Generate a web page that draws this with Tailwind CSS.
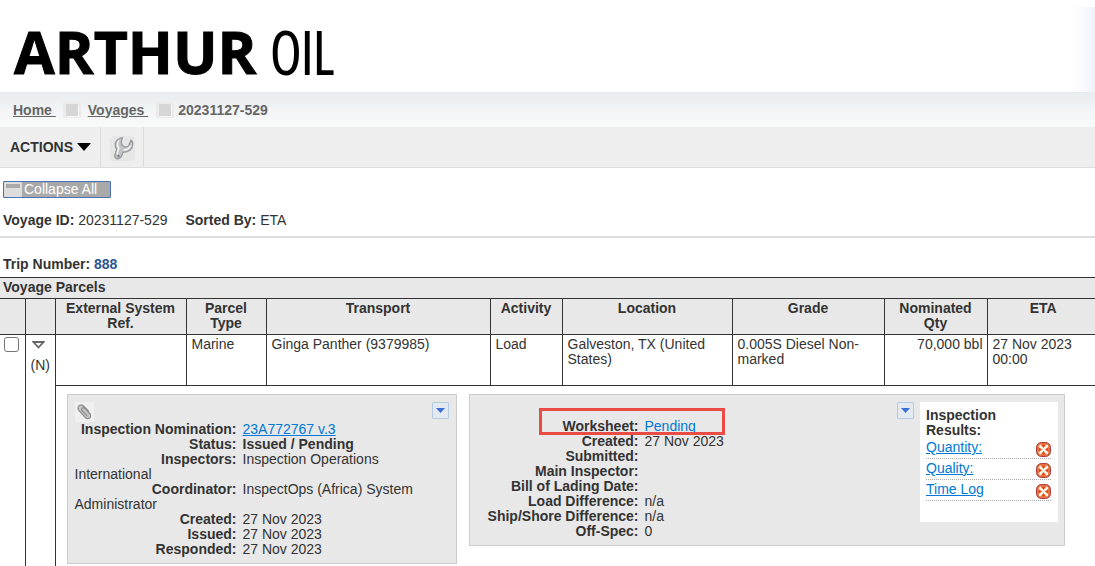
<!DOCTYPE html>
<html lang="en">
<head>
  <meta charset="UTF-8" />
  <meta name="viewport" content="width=device-width, initial-scale=1.0"/>
  <title>Voyage 20231127-529 - Arthur Oil</title>
  <script src="https://cdn.jsdelivr.net/npm/@tailwindcss/browser@4"></script>
</head>
<body class="bg-white text-[#333] font-['Liberation_Sans',Arial,sans-serif] text-[14px] leading-[15px] overflow-x-hidden">

  <header class="pt-[7px]">
    <div class="h-[85px] flex justify-between">
      <h1 class="pt-[3px] pl-[14px] flex items-center gap-[14px] text-black text-[59px] leading-[82px] whitespace-nowrap">
        <span class="font-bold font-['Open_Sans','Noto_Sans',sans-serif] [-webkit-text-stroke:1px_black]">ARTHUR</span>
        <span class="font-light font-['Open_Sans_Condensed_Light','Noto_Sans_ExtraCondensed_Light','Noto_Sans_ExtraCondensed','Roboto_Condensed_Light','Roboto_Condensed','Liberation_Sans_Narrow',sans-serif] [-webkit-text-stroke:2px_black]">OIL</span>
      </h1>
      <div class="w-[22px] bg-linear-to-r from-white to-[#eef3f9]"></div>
    </div>
  </header>

  <nav aria-label="Breadcrumb" class="h-[35px] flex items-center pl-[13px] border-t border-[#e8e9eb] bg-linear-to-b from-[#e9edf0] to-[#fafafa] font-bold text-[#666]">
    <a href="#" class="underline whitespace-pre">Home </a>
    <svg class="mx-[7px]" width="18" height="16" viewBox="0 0 18 16"><rect width="18" height="16" rx="1" fill="#ebebeb"/><rect x="3" y="2" width="12" height="12" fill="#d6d6d6"/><path d="M4 14.500h11.500V3" fill="none" stroke="#f8f8f8"/></svg>
    <a href="#" class="underline whitespace-pre">Voyages </a>
    <svg class="ml-[8px] mr-[4px]" width="18" height="16" viewBox="0 0 18 16"><rect width="18" height="16" rx="1" fill="#ebebeb"/><rect x="3" y="2" width="12" height="12" fill="#d6d6d6"/><path d="M4 14.500h11.500V3" fill="none" stroke="#f8f8f8"/></svg>
    <span>20231127-529</span>
  </nav>

  <div class="h-[41px] flex bg-[#eee] border-b border-[#ddd]">
    <button class="w-[101px] pl-[10px] flex items-center gap-[4px] font-bold border-r border-[#ddd]">
      ACTIONS
      <svg width="14" height="8" viewBox="0 0 14 8"><path d="M0 0h14L7 8z" fill="#000"/></svg>
    </button>
    <button aria-label="Settings" class="w-[43px] flex items-center justify-center pt-[3px] border-r border-[#ddd]">
      <svg width="25" height="25" viewBox="0 0 25 25"><rect width="25" height="25" rx="4" fill="#e6e6e6"/><path d="M12.500 1.500C8 2 4.800 5.500 5.200 10c.2 1.500.8 2.500 1.500 3.200L4.800 19c-.5 2.500 1.400 4.200 3.700 3.700 1.900-.4 2.800-1.600 3.300-3.200l1.400-3.300c5.200.3 9.300-3 9.600-7.700 0-2-.6-3.500-1.800-4.500l-2.500 6-3.500 1.200-3.500-2.700 0-4z" fill="#c3c4c7" stroke="#96979a" stroke-width="1.200" stroke-linejoin="round"/><path d="M9 4.500C7.200 6.500 7 9.500 8.700 12L7 18.500M13.500 14c3.500 0 5.800-1.500 7.300-4.500" fill="none" stroke="#f4f4f4" stroke-width="1.600"/><circle cx="8.500" cy="20" r="1.200" fill="#7c7d80"/></svg>
    </button>
  </div>

  <main>
    <div class="pt-[13px] pl-[3px]">
      <button class="w-[108px] h-[17px] flex items-center gap-[2px] bg-[#a9a9a9] border border-[#4a72b8] rounded-[1px] text-white">
        <svg width="18" height="15" viewBox="0 0 18 15"><rect width="18" height="15" rx="1" fill="#ddd"/><rect x="2" y="2" width="14" height="4" fill="#a9a9a9"/></svg>
        Collapse All
      </button>
    </div>

    <div class="mt-[15px] pb-[8px] pl-[3px] flex gap-[18px] border-b-2 border-[#ddd]">
      <p><b>Voyage ID:</b> 20231127-529</p>
      <p><b>Sorted By:</b> ETA</p>
    </div>

    <h2 class="mt-[19px] mb-[5px] pl-[3px] font-bold">Trip Number: <span class="text-[#2a5690]">888</span></h2>

    <table class="w-full table-fixed border-collapse">
      <colgroup>
        <col class="w-[25px]"><col class="w-[30px]"><col class="w-[131px]"><col class="w-[80px]"><col class="w-[224px]"><col class="w-[72px]"><col class="w-[170px]"><col class="w-[152px]"><col class="w-[103px]"><col>
      </colgroup>
      <thead class="bg-[#e8e8e8]">
        <tr class="h-[21px] border-y border-[#333]">
          <th colspan="10" class="pl-[3px] pb-[2px] text-left">Voyage Parcels</th>
        </tr>
        <tr class="h-[36px] align-top border-b border-[#333]">
          <th class="border-r border-[#333]"></th>
          <th class="border-r border-[#333]"></th>
          <th class="pt-[2px] px-[4px] border-r border-[#333]">External System Ref.</th>
          <th class="pt-[2px] px-[4px] border-r border-[#333]">Parcel Type</th>
          <th class="pt-[2px] px-[4px] border-r border-[#333]">Transport</th>
          <th class="pt-[2px] px-[4px] border-r border-[#333]">Activity</th>
          <th class="pt-[2px] px-[4px] border-r border-[#333]">Location</th>
          <th class="pt-[2px] px-[4px] border-r border-[#333]">Grade</th>
          <th class="pt-[2px] px-[4px] border-r border-[#333]">Nominated Qty</th>
          <th class="pt-[2px] pl-[4px]">ETA</th>
        </tr>
      </thead>
      <tbody>
        <tr class="h-[51px] align-top">
          <td rowspan="2" class="pt-[2px] pl-[4px] border-r border-[#333]">
            <input type="checkbox" aria-label="Select parcel" class="block size-[15px] appearance-none bg-white border border-[#767676] rounded-[3px]" />
          </td>
          <td rowspan="2" class="pt-[6px] pl-[5px] border-r border-[#333]">
            <button aria-label="Toggle parcel details" class="block pl-[1px]">
              <svg width="13" height="8" viewBox="0 0 13 8"><path d="M1.500 1h10L6.500 6.500z" fill="#fff" stroke="#666" stroke-width="1.800"/></svg>
            </button>
            <p class="mt-[9px]">(N)</p>
          </td>
          <td class="border-r border-b border-[#333]"></td>
          <td class="pt-[2px] pl-[5px] border-r border-b border-[#333]">Marine</td>
          <td class="pt-[2px] pl-[5px] border-r border-b border-[#333]">Ginga Panther (9379985)</td>
          <td class="pt-[2px] pl-[5px] border-r border-b border-[#333]">Load</td>
          <td class="pt-[2px] pl-[5px] border-r border-b border-[#333]">Galveston, TX (United States)</td>
          <td class="pt-[2px] pl-[5px] border-r border-b border-[#333]">0.005S Diesel Non-marked</td>
          <td class="pt-[2px] pr-[4px] text-right border-r border-b border-[#333]">70,000 bbl</td>
          <td class="pt-[2px] pl-[5px] border-b border-[#333]">27 Nov 2023 00:00</td>
        </tr>
        <tr>
          <td colspan="8" class="pt-[8px] pl-[11px] pr-[30px] pb-[8px]">
            <div class="flex items-start gap-[12px]">

              <!-- nomination -->
              <section class="w-[390px] shrink-0 p-[7px] pb-[6px] bg-[#e8e8e8] border border-[#ccc]">
                <div class="h-[20px] flex justify-between items-start">
                  <svg width="19" height="20" viewBox="0 0 19 20"><rect width="19" height="20" fill="#f0f0f0"/><path d="M3 7c-.5-3 2.500-5 5-3.500l7 7c2 2.500 1.500 5.500-.8 6.200-1.700.5-3-.2-4.200-1.700z" fill="#c4c4c4"/><g fill="none" stroke="#8e8e8e" stroke-width="1.200" stroke-linecap="round"><path d="M13.500 9L8 3.500C6 2 2.500 3.500 3 6.500c.1.800.4 1.300 1 2l6.500 7.300c1.800 1.700 5 .7 5.200-1.800 0-1.200-.4-2-1.200-2.700L9.500 6.200C7.800 5 6 6.500 6.800 8.200l5 5.500"/></g></svg>
                  <button aria-label="Nomination menu" class="size-[17px] flex items-center justify-center bg-[#e3e9f1] border border-[#b5cbe0] rounded-[1px]">
                    <svg width="9" height="5" viewBox="0 0 9 5"><path d="M0 0h9L4.500 5z" fill="#3a6fd8"/></svg>
                  </button>
                </div>
                <div><b class="float-left w-[162px] mr-[6px] text-right">Inspection Nomination:</b><a href="#" class="text-[#0078d7] underline">23A772767 v.3</a></div>
                <div><b class="float-left w-[162px] mr-[6px] text-right">Status:</b><b>Issued / Pending</b></div>
                <div><b class="float-left w-[162px] mr-[6px] text-right">Inspectors:</b>Inspection Operations International</div>
                <div><b class="float-left w-[162px] mr-[6px] text-right">Coordinator:</b>InspectOps (Africa) System Administrator</div>
                <div><b class="float-left w-[162px] mr-[6px] text-right">Created:</b>27 Nov 2023</div>
                <div><b class="float-left w-[162px] mr-[6px] text-right">Issued:</b>27 Nov 2023</div>
                <div><b class="float-left w-[162px] mr-[6px] text-right">Responded:</b>27 Nov 2023</div>
              </section>

              <!-- worksheet -->
              <section class="relative grow flex items-start p-[7px] pr-[6px] pb-[6px] bg-[#e8e8e8] border border-[#ccc]">
                <dl class="grow pt-[17px] grid grid-cols-[162px_1fr] auto-rows-[15px] gap-x-[6px]">
                  <dt class="font-bold text-right">Worksheet:</dt><dd><a href="#" class="text-[#0078d7]">Pending</a></dd>
                  <dt class="font-bold text-right">Created:</dt><dd>27 Nov 2023</dd>
                  <dt class="font-bold text-right">Submitted:</dt><dd></dd>
                  <dt class="font-bold text-right">Main Inspector:</dt><dd></dd>
                  <dt class="font-bold text-right">Bill of Lading Date:</dt><dd></dd>
                  <dt class="font-bold text-right">Load Difference:</dt><dd>n/a</dd>
                  <dt class="font-bold text-right">Ship/Shore Difference:</dt><dd>n/a</dd>
                  <dt class="font-bold text-right">Off-Spec:</dt><dd>0</dd>
                </dl>
                <button aria-label="Worksheet menu" class="size-[17px] mr-[6px] flex items-center justify-center bg-[#e3e9f1] border border-[#b5cbe0] rounded-[1px]">
                  <svg width="9" height="5" viewBox="0 0 9 5"><path d="M0 0h9L4.500 5z" fill="#3a6fd8"/></svg>
                </button>
                <div class="w-[138px] h-[120px] py-[6px] pl-[6px] pr-[7px] bg-white">
                  <h3 class="w-[80px] font-bold">Inspection Results:</h3>
                  <ul>
                    <li class="h-[21px] flex justify-between border-b border-dotted border-[#aaa]">
                      <a href="#" class="pt-[2px] text-[#0078d7] underline">Quantity:</a>
                      <svg class="mt-[4px]" width="15" height="15" viewBox="0 0 15 15"><rect x=".5" y=".5" width="14" height="14" rx="5" fill="#e8703f" stroke="#a83a3a"/><path d="M4.300 4.300l6.400 6.400M10.700 4.300l-6.400 6.400" stroke="#fff3e6" stroke-width="3.200" stroke-linecap="round"/><path d="M7.500 6l-2-3h4zM7.500 9l-2 3h4zM6 7.500l-3-2v4zM9 7.500l3-2v4z" fill="#e0480f"/></svg>
                    </li>
                    <li class="h-[21px] flex justify-between border-b border-dotted border-[#aaa]">
                      <a href="#" class="pt-[2px] text-[#0078d7] underline">Quality:</a>
                      <svg class="mt-[4px]" width="15" height="15" viewBox="0 0 15 15"><rect x=".5" y=".5" width="14" height="14" rx="5" fill="#e8703f" stroke="#a83a3a"/><path d="M4.300 4.300l6.400 6.400M10.700 4.300l-6.400 6.400" stroke="#fff3e6" stroke-width="3.200" stroke-linecap="round"/><path d="M7.500 6l-2-3h4zM7.500 9l-2 3h4zM6 7.500l-3-2v4zM9 7.500l3-2v4z" fill="#e0480f"/></svg>
                    </li>
                    <li class="h-[21px] flex justify-between border-b border-dotted border-[#aaa]">
                      <a href="#" class="pt-[2px] text-[#0078d7] underline">Time Log</a>
                      <svg class="mt-[4px]" width="15" height="15" viewBox="0 0 15 15"><rect x=".5" y=".5" width="14" height="14" rx="5" fill="#e8703f" stroke="#a83a3a"/><path d="M4.300 4.300l6.400 6.400M10.700 4.300l-6.400 6.400" stroke="#fff3e6" stroke-width="3.200" stroke-linecap="round"/><path d="M7.500 6l-2-3h4zM7.500 9l-2 3h4zM6 7.500l-3-2v4zM9 7.500l3-2v4z" fill="#e0480f"/></svg>
                    </li>
                  </ul>
                </div>
                <div class="absolute left-[69px] top-[13px] w-[186px] h-[27px] border-3 border-[#e84c45] pointer-events-none"></div>
              </section>

            </div>
          </td>
        </tr>
      </tbody>
    </table>
  </main>

</body>
</html>
